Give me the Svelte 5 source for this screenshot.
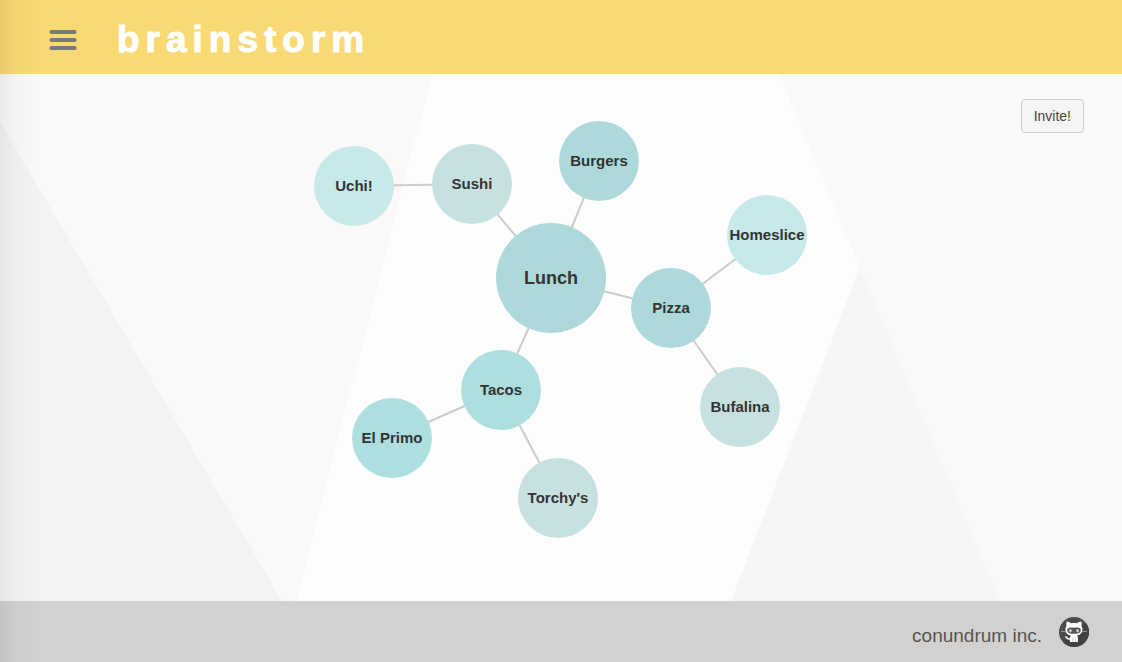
<script>
  const ideas = [
    { id: 'lunch', label: 'Lunch', x: 551, y: 204, r: 55, fill: '#aed9da' },
    { id: 'burgers', label: 'Burgers', x: 599, y: 87, r: 40, fill: '#aed9da', parent: 'lunch' },
    { id: 'sushi', label: 'Sushi', x: 472, y: 110, r: 40, fill: '#c7e1e0', parent: 'lunch' },
    { id: 'uchi', label: 'Uchi!', x: 354, y: 112, r: 40, fill: '#c8e9e9', parent: 'sushi' },
    { id: 'pizza', label: 'Pizza', x: 671, y: 234, r: 40, fill: '#aed9da', parent: 'lunch' },
    { id: 'homeslice', label: 'Homeslice', x: 767, y: 161, r: 40, fill: '#c8e9e9', parent: 'pizza' },
    { id: 'bufalina', label: 'Bufalina', x: 740, y: 333, r: 40, fill: '#c7e1e0', parent: 'pizza' },
    { id: 'tacos', label: 'Tacos', x: 501, y: 316, r: 40, fill: '#addfde', parent: 'lunch' },
    { id: 'elprimo', label: 'El Primo', x: 392, y: 364, r: 40, fill: '#addfde', parent: 'tacos' },
    { id: 'torchys', label: "Torchy's", x: 558, y: 424, r: 40, fill: '#c7e1e0', parent: 'tacos' }
  ];

  const byId = Object.fromEntries(ideas.map((idea) => [idea.id, idea]));
  const links = ideas
    .filter((idea) => idea.parent)
    .map((idea) => ({ from: byId[idea.parent], to: idea }));
</script>

<div class="page">
  <header>
    <button class="menu" type="button" aria-label="Menu">
      <svg width="28" height="22" viewBox="0 0 28 22" aria-hidden="true">
        <rect x="0.5" y="1" width="27" height="4" rx="1.8" />
        <rect x="0.5" y="9" width="27" height="4" rx="1.8" />
        <rect x="0.5" y="17" width="27" height="4" rx="1.8" />
      </svg>
    </button>
    <h1>brainstorm</h1>
  </header>

  <main>
    <svg class="backdrop" viewBox="0 0 1122 527" preserveAspectRatio="none" aria-hidden="true">
      <rect width="1122" height="527" fill="#fdfdfd" />
      <polygon points="0,0 432,0 296,527 0,527" fill="#faf9f7" />
      <polygon points="0,48 282,527 0,527" fill="#f3f3f1" />
      <polygon points="779,0 1122,0 1122,527 1000,527" fill="#f9f9f9" />
      <polygon points="860,193 1000,527 731,527" fill="#f6f6f4" />
    </svg>

    <svg class="map" viewBox="0 0 1122 527">
      {#each links as { from, to }}
        <line x1={from.x} y1={from.y} x2={to.x} y2={to.y} />
      {/each}
      {#each ideas as idea}
        <g class:root={!idea.parent}>
          <circle cx={idea.x} cy={idea.y} r={idea.r} fill={idea.fill} />
          <text x={idea.x} y={idea.y + (idea.parent ? 5 : 6)}>{idea.label}</text>
        </g>
      {/each}
    </svg>

    <button class="invite" type="button">Invite!</button>
  </main>

  <footer>
    <span>conundrum inc.</span>
    <a href="#github" aria-label="GitHub">
      <svg width="30" height="30" viewBox="0 0 30 30" aria-hidden="true">
        <circle cx="15" cy="15" r="15" fill="#4b4b4b" />
        <path d="M4 25 27 6A15 15 0 0 1 15 30 15 15 0 0 1 4 25z" fill="#414141" />
        <path d="M2 14.3 8 14.8M28 14.3 22 14.8" stroke="#a0a0a0" stroke-width="0.9" fill="none" />
        <path d="M7.800 4.600c1.500 0 3 .8 4 1.700 2-.5 4.400-.5 6.400 0 1-.9 2.500-1.700 4-1.700.7 1.600.6 3 .2 4.300.9 1.200 1.200 2.600 1 4.300-.4 3.400-2.700 4.900-5.400 5.300.6.700.9 1.600.9 2.700V25h-8v-2.300c-2 .3-3.200-.4-3.900-1.600-.4-.7-.8-1-1.400-1.300.3-.9 1.800-.6 2.500.3.8 1 1.500 1.300 2.800.9.100-1 .4-1.900.9-2.500-2.800-.4-4.900-1.900-5.300-5.300-.2-1.700.2-3.100 1.100-4.300-.4-1.300-.5-2.700.2-4.300z" fill="#fff" />
        <path d="M10.200 10.700c1.700-.3 3.200.1 4.800.1s3.100-.4 4.800-.1c1.600.4 2.100 1.600 1.900 3-.3 2.500-3.100 3-6.700 3s-6.400-.5-6.700-3c-.2-1.400.3-2.600 1.900-3z" fill="#555" />
        <ellipse cx="11.400" cy="13.700" rx="1.200" ry="1.700" fill="#ddd" />
        <ellipse cx="18.600" cy="13.700" rx="1.200" ry="1.700" fill="#ddd" />
        <path d="M13.700 20.500v4.500M16.300 20.500v4.500" stroke="#bbb" stroke-width="0.7" />
      </svg>
    </a>
  </footer>

  <div class="edge-shadow"></div>
</div>

<style>
  :global(body) {
    margin: 0;
  }

  .page {
    position: relative;
    display: flex;
    flex-direction: column;
    min-height: 100vh;
    overflow: hidden;
    font-family: "Liberation Sans", Arial, sans-serif;
  }

  header {
    display: flex;
    align-items: center;
    gap: 40px;
    box-sizing: border-box;
    min-height: 74px;
    padding: 5px 49px 0;
    background: #f8d974;
  }

  button {
    font-family: inherit;
    cursor: pointer;
  }

  .menu {
    padding: 0;
    border: 0;
    background: none;
  }

  .menu svg {
    display: block;
    fill: #767a7b;
  }

  h1 {
    margin: 0;
    color: #fff;
    font-size: 37px;
    line-height: 44px;
    letter-spacing: 6px;
    -webkit-text-stroke: 1px #fff;
  }

  main {
    flex: 1;
    display: grid;
    grid-template: minmax(0, 1fr) / minmax(0, 1fr);
  }

  main > * {
    grid-area: 1 / 1;
  }

  .backdrop,
  .map {
    display: block;
    width: 100%;
    height: 100%;
  }

  line {
    stroke: #ccc;
    stroke-width: 2px;
  }

  text {
    fill: #333;
    font-size: 15px;
    font-weight: 700;
    text-anchor: middle;
  }

  .root text {
    font-size: 18px;
  }

  .invite {
    place-self: start end;
    margin: 25px 38px;
    padding: 8px 12px;
    border: 1px solid #ccc;
    border-radius: 4px;
    background: #f6f5f3;
    color: #444;
    font-size: 14px;
    line-height: 16px;
  }

  footer {
    display: flex;
    align-items: center;
    justify-content: flex-end;
    gap: 17px;
    box-sizing: border-box;
    min-height: 61px;
    padding: 0 33px;
    background: #d2d1cf;
    color: #555;
    font-size: 19px;
    line-height: 22px;
  }

  footer span {
    padding-top: 8px;
  }

  footer svg {
    display: block;
  }

  .edge-shadow {
    position: absolute;
    inset: 0 auto 0 0;
    width: 40px;
    background: linear-gradient(to right, rgba(0, 0, 0, 0.06), rgba(0, 0, 0, 0.025) 40%, transparent);
    pointer-events: none;
  }
</style>
